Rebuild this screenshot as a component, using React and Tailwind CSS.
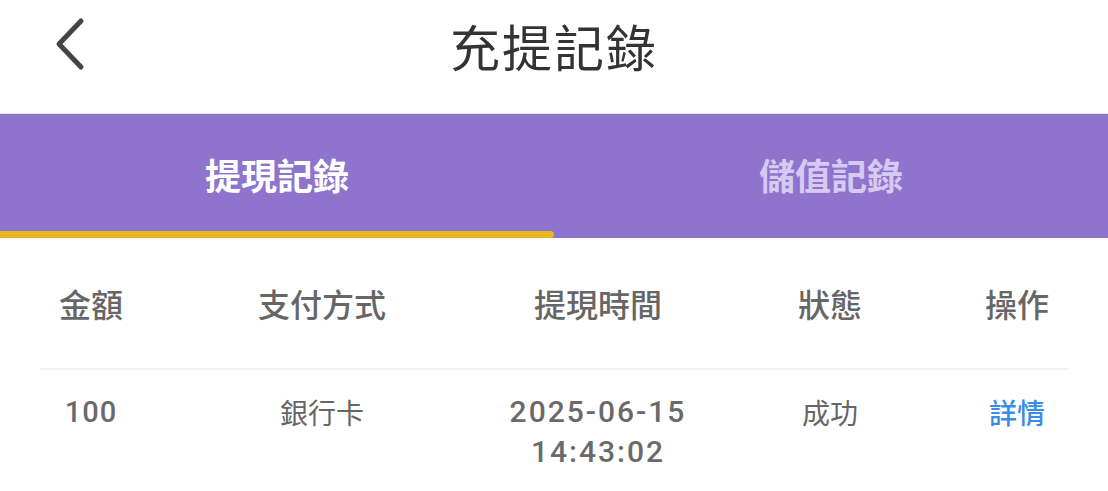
import { useState } from "react";

const font = { fontFamily: '"Noto Sans CJK TC", "Noto Sans", sans-serif' };
const num = { fontFamily: 'Roboto, "Noto Sans CJK TC", sans-serif' };

export default function App() {
  const [tab, setTab] = useState(0);

  return (
    <div className="w-[1108px] h-[491px] bg-white overflow-hidden" style={font}>
      {/* Header */}
      <div className="relative h-[114px] flex items-center justify-center border-b border-[#e4e4e4]">
        <button className="absolute left-[49px] top-[16px] w-[40px] h-[56px] flex items-center justify-center">
          <svg width="36" height="56" viewBox="0 0 36 56" fill="none">
            <path d="M30 5 L8 28 L30 51" stroke="#444" strokeWidth="5" strokeLinecap="round" strokeLinejoin="round" />
          </svg>
        </button>
        <h1 className="text-[50px] leading-none text-[#333] font-normal tracking-[2px] -mt-[24px]">充提記錄</h1>
      </div>

      {/* Tabs */}
      <div className="h-[124px] bg-[#8e74cd] flex">
        {["提現記錄", "儲值記錄"].map((t, i) => (
          <button
            key={t}
            onClick={() => setTab(i)}
            className="relative flex-1 flex items-center justify-center -mt-[4px]"
          >
            <span className={`text-[36px] font-bold leading-none ${tab === i ? "text-white" : "text-[#d6caf2]"}`}>{t}</span>
            {tab === i && (
              <span className="absolute left-0 right-0 bottom-0 h-[7px] bg-[#ebb522] rounded-r-full" />
            )}
          </button>
        ))}
      </div>

      {/* Table */}
      <div className="mx-[40px] w-[1028px]">
        <div className="grid grid-cols-[102px_360px_192px_272px_102px] h-[132px] items-center border-b-2 border-[#f1f1f1] text-[32px] font-medium text-[#666] leading-none">
          <div className="text-center">金額</div>
          <div className="text-center">支付方式</div>
          <div className="text-center">提現時間</div>
          <div className="text-center">狀態</div>
          <div className="text-center">操作</div>
        </div>
        <div className="grid grid-cols-[102px_360px_192px_272px_102px] pt-[22px] text-[28px] text-[#666] leading-[40px]">
          <div className="text-center font-medium text-[29px] tracking-[1px] text-[#6a6a6a]" style={num}>100</div>
          <div className="text-center">銀行卡</div>
          <div className="text-center font-medium text-[30px] tracking-[2px] text-[#6a6a6a]" style={num}>
            2025-06-15
            <br />
            14:43:02
          </div>
          <div className="text-center">成功</div>
          <div className="text-center text-[#3a8de6] font-medium">詳情</div>
        </div>
      </div>
    </div>
  );
}
